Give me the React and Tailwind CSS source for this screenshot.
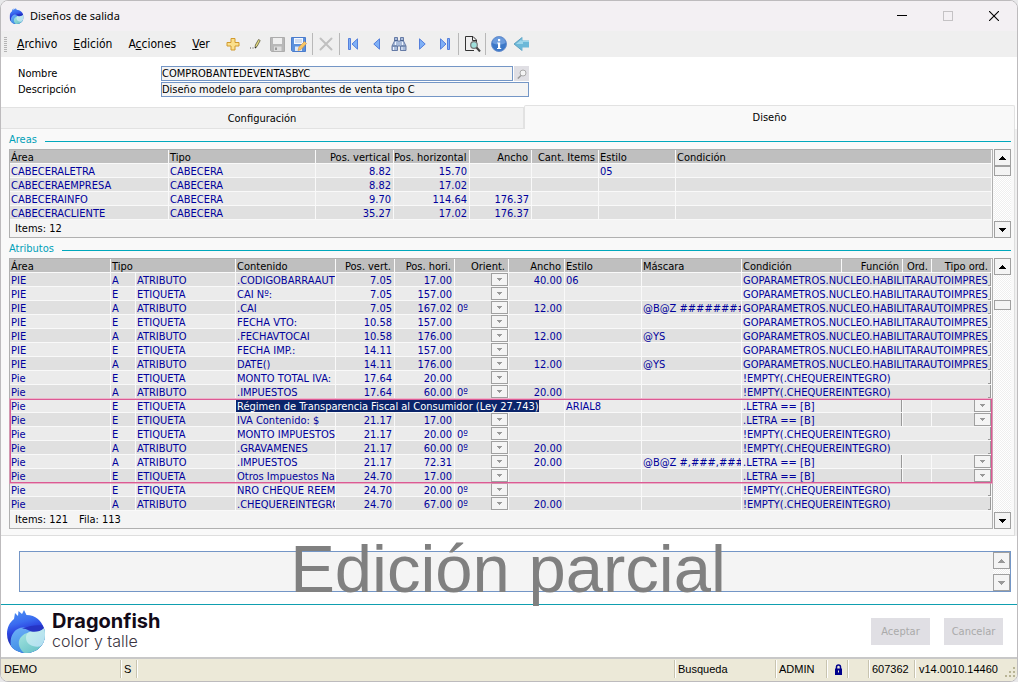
import React from "react";

const areaRows = [
  ["CABECERALETRA", "CABECERA", "8.82", "15.70", "", "", "05", ""],
  ["CABECERAEMPRESA", "CABECERA", "8.82", "17.02", "", "", "", ""],
  ["CABECERAINFO", "CABECERA", "9.70", "114.64", "176.37", "", "", ""],
  ["CABECERACLIENTE", "CABECERA", "35.27", "17.02", "176.37", "", "", ""],
];

const AUTO = "GOPARAMETROS.NUCLEO.HABILITARAUTOIMPRES";
const EMPTY = "!EMPTY(.CHEQUEREINTEGRO)";
const LETRA = ".LETRA == [B]";

// area, type, content, vertical, horizontal, orientation, width, style, mask, condition
const attributeRows = [
  ["PIE", "A", ".CODIGOBARRAAUT", "7.05", "17.00", "", "40.00", "06", "", AUTO],
  ["PIE", "E", "CAI Nº:", "7.05", "157.00", "", "", "", "", AUTO],
  ["PIE", "A", ".CAI", "7.05", "167.02", "0º", "12.00", "", "@B@Z ########", AUTO],
  ["PIE", "E", "FECHA VTO:", "10.58", "157.00", "", "", "", "", AUTO],
  ["PIE", "A", ".FECHAVTOCAI", "10.58", "176.00", "", "12.00", "", "@YS", AUTO],
  ["PIE", "E", "FECHA IMP.:", "14.11", "157.00", "", "", "", "", AUTO],
  ["PIE", "A", "DATE()", "14.11", "176.00", "", "12.00", "", "@YS", AUTO],
  ["Pie", "E", "MONTO TOTAL IVA:", "17.64", "20.00", "", "", "", "", EMPTY],
  ["Pie", "A", ".IMPUESTOS", "17.64", "60.00", "0º", "20.00", "", "", EMPTY],
  ["Pie", "E", "Régimen de Transparencia Fiscal al Consumidor (Ley 27.743)", null, "", "", "", "ARIAL8", "", LETRA],
  ["Pie", "E", "IVA Contenido: $", "21.17", "17.00", "", "", "", "", LETRA],
  ["Pie", "E", "MONTO IMPUESTOS", "21.17", "20.00", "0º", "", "", "", EMPTY],
  ["Pie", "A", ".GRAVAMENES", "21.17", "60.00", "0º", "20.00", "", "", EMPTY],
  ["Pie", "A", ".IMPUESTOS", "21.17", "72.31", "", "20.00", "", "@B@Z #,###,###", LETRA],
  ["Pie", "E", "Otros Impuestos Nac", "24.70", "17.00", "", "", "", "", LETRA],
  ["Pie", "E", "NRO CHEQUE REEME", "24.70", "20.00", "0º", "", "", "", EMPTY],
  ["Pie", "A", ".CHEQUEREINTEGRO", "24.70", "67.00", "0º", "20.00", "", "", EMPTY],
];

const UI = "font-['DejaVu_Sans_Condensed','DejaVu_Sans',sans-serif] [font-stretch:condensed]";

function Cell({ children, right, flush, ...rest }) {
  const pad = flush ? "p-0" : right ? "pt-[2px] pr-[2px] text-right" : "pt-[2px] pl-px text-left";
  return (
    <td
      className={`h-[14px] overflow-hidden border-r border-b border-[#f9f9f9] leading-[11px] whitespace-nowrap ${pad}`}
      {...rest}
    >
      {children}
    </td>
  );
}

function Head({ children, right, ...rest }) {
  return (
    <th
      scope="col"
      className={`h-[14px] overflow-hidden border-r border-b border-[#f9f9f9] pt-[2px] leading-[11px] font-normal whitespace-nowrap ${
        right ? "pr-[3px] text-right" : "pl-px text-left"
      }`}
      {...rest}
    >
      {children}
    </th>
  );
}

function DropBox() {
  return (
    <span aria-hidden="true" className="flex h-[13px] w-[17px] shrink-0 items-center justify-center border border-[#a0a0a0] bg-[#f4f4f4]">
      <svg width="5" height="3" viewBox="0 0 5 3">
        <path d="M0 0h5v1H4v1H3v1H2V2H1V1H0z" fill="#999" />
      </svg>
    </span>
  );
}

function Combo({ value, label }) {
  return (
    <div className="flex h-[13px]">
      <select aria-label={label} defaultValue={value} className="h-[13px] min-w-0 flex-1 appearance-none bg-transparent p-0 pt-[2px] pl-[2px] leading-[11px] outline-none">
        <option value={value}>{value}</option>
      </select>
      <DropBox />
    </div>
  );
}

function ScrollButton({ up, muted, label }) {
  return (
    <button type="button" aria-label={label} className="flex h-[17px] w-[17px] shrink-0 items-center justify-center border border-[#a0a0a0] bg-[#f4f4f4]">
      <svg width="7" height="4" viewBox="0 0 7 4" fill={muted ? "#999" : "#000"}>
        <path d={up ? "M3 0h1v1h1v1h1v1h1v1H0V3h1V2h1V1h1z" : "M0 0h7v1H6v1H5v1H4v1H3V3H2V2H1V1H0z"} />
      </svg>
    </button>
  );
}

const TRACK = "bg-[repeating-conic-gradient(#ffffff_0_25%,#efefef_0_50%)] bg-[length:2px_2px]";

function GridScroll({ children }) {
  return (
    <div className={`ml-px flex w-[17px] shrink-0 flex-col ${TRACK}`}>
      <ScrollButton up label="Subir" />
      {children}
      <div className="flex-1" />
      <ScrollButton label="Bajar" />
    </div>
  );
}

function Legend({ children }) {
  return (
    <div className="mt-[3px] mb-[3px] flex h-[14px] items-start gap-[8px]">
      <h2 className="leading-[16px] text-[#00a0b8]">{children}</h2>
      <div className="mb-1 h-px flex-1 self-end bg-[#00a8bc]" />
    </div>
  );
}

function AreasGrid() {
  return (
    <div className="flex">
      <div className="min-w-0 flex-1 border border-[#b0b0b0] bg-[#f4f4f4]">
        <table className="w-full table-fixed border-separate border-spacing-0">
          <colgroup>
            <col className="w-[159px]" />
            <col className="w-[147px]" />
            <col className="w-[78px]" />
            <col className="w-[76px]" />
            <col className="w-[62px]" />
            <col className="w-[67px]" />
            <col className="w-[77px]" />
            <col />
          </colgroup>
          <thead className="bg-[#bfbfbf] text-black">
            <tr>
              <Head>Área</Head>
              <Head>Tipo</Head>
              <Head right>Pos. vertical</Head>
              <Head right>Pos. horizontal</Head>
              <Head right>Ancho</Head>
              <Head right>Cant. Items</Head>
              <Head>Estilo</Head>
              <Head>Condición</Head>
            </tr>
          </thead>
          <tbody className="text-[#00009c]">
            {areaRows.map((row) => (
              <tr key={row[0]} className="odd:bg-[#ebebeb] even:bg-[#e0e0e0]">
                {row.map((value, i) => (
                  <Cell key={i} right={i > 1 && i < 6}>{value}</Cell>
                ))}
              </tr>
            ))}
          </tbody>
        </table>
        <p className="h-[17px] pl-[5px] leading-[17px] text-black">Items: 12</p>
      </div>
      <GridScroll>
        <div className="h-[10px] border border-[#a0a0a0] bg-[#f4f4f4]" />
      </GridScroll>
    </div>
  );
}

function AttributesGrid() {
  return (
    <div className="flex">
      <div className="relative min-w-0 flex-1 border border-[#b0b0b0] bg-[#f4f4f4]">
        <table className="w-full table-fixed border-separate border-spacing-0">
          <colgroup>
            <col className="w-[101px]" />
            <col className="w-[25px]" />
            <col className="w-[100px]" />
            <col className="w-[100px]" />
            <col className="w-[59px]" />
            <col className="w-[60px]" />
            <col className="w-[54px]" />
            <col className="w-[56px]" />
            <col className="w-[77px]" />
            <col className="w-[100px]" />
            <col className="w-[100px]" />
            <col className="w-[61px]" />
            <col className="w-[29px]" />
            <col />
          </colgroup>
          <thead className="bg-[#bfbfbf] text-black">
            <tr>
              <Head>Área</Head>
              <Head colSpan={2}>Tipo</Head>
              <Head>Contenido</Head>
              <Head right>Pos. vert.</Head>
              <Head right>Pos. hori.</Head>
              <Head right>Orient.</Head>
              <Head right>Ancho</Head>
              <Head>Estilo</Head>
              <Head>Máscara</Head>
              <Head>Condición</Head>
              <Head right>Función</Head>
              <Head right>Ord.</Head>
              <Head right>Tipo ord.</Head>
            </tr>
          </thead>
          <tbody className="text-[#00009c]">
            {attributeRows.map(([area, type, content, vert, hori, orient, width, style, mask, cond], i) => (
              <tr key={i} className="odd:bg-[#e0e0e0] even:bg-[#ebebeb]">
                <Cell>{area}</Cell>
                <Cell>{type}</Cell>
                <Cell>{type === "A" ? "ATRIBUTO" : "ETIQUETA"}</Cell>
                {vert === null ? (
                  <Cell flush colSpan={5}>
                    <span className="inline-block h-[13px] bg-[#0a246a] pt-[2px] pl-px align-top leading-[11px] text-white">{content}</span>
                  </Cell>
                ) : (
                  <>
                    <Cell>{content}</Cell>
                    <Cell right>{vert}</Cell>
                    <Cell right>{hori}</Cell>
                    <Cell flush>
                      <Combo value={orient} label={`Orientación, fila ${i + 1}`} />
                    </Cell>
                    <Cell right>{width}</Cell>
                  </>
                )}
                <Cell>{style}</Cell>
                <Cell>{mask}</Cell>
                {cond === LETRA ? (
                  <>
                    <Cell flush colSpan={2}>
                      <div className="h-[13px] border-r border-[#999] pt-[2px] pl-px">{cond}</div>
                    </Cell>
                    <Cell />
                    <Cell flush>
                      <Combo value="" label={`Tipo de orden, fila ${i + 1}`} />
                    </Cell>
                  </>
                ) : (
                  <Cell flush colSpan={4}>
                    <div className="flex h-[13px]">
                      <span className="min-w-0 flex-1 overflow-hidden pt-[2px] pl-px">{cond}</span>
                      <span className="w-[3px] border-r border-b border-[#999]" />
                    </div>
                  </Cell>
                )}
              </tr>
            ))}
          </tbody>
        </table>
        <p className="flex h-[17px] gap-[11px] pl-[5px] leading-[17px] text-black">
          <span>Items: 121</span>
          <span>Fila: 113</span>
        </p>
        <div className="pointer-events-none absolute inset-x-0 top-[140px] h-[84px] border border-[#dc5a94] shadow-[0_0_0_1px_#e48ab0a0]" />
      </div>
      <GridScroll>
        <div className="mt-[25px] h-[10px] border border-[#a0a0a0] bg-[#f4f4f4]" />
      </GridScroll>
    </div>
  );
}

function DragonLogo({ className, id }) {
  return (
    <svg viewBox="0 0 38 43" className={className} aria-hidden="true">
      <defs>
        <clipPath id={`${id}clip`}>
          <path d="M7 9 8 3l3 3 .5-5L15 4l2-4 2.500 5C29 5 34 11 36.500 17c1 3 1.500 5 1.500 8 0 10-8 18-19 18S0 35 0 24C0 17 3 12 7 9z" />
        </clipPath>
        <linearGradient id={`${id}a`} x1="0.35" y1="0" x2="0.5" y2="0.6">
          <stop offset="0" stopColor="#4a8cf2" />
          <stop offset="0.45" stopColor="#3a6cf0" />
          <stop offset="0.75" stopColor="#2c44e0" />
          <stop offset="1" stopColor="#2434c0" />
        </linearGradient>
        <linearGradient id={`${id}b`} x1="0" y1="0" x2="0.4" y2="1">
          <stop offset="0" stopColor="#6fb0f8" />
          <stop offset="1" stopColor="#3c8ce4" />
        </linearGradient>
        <linearGradient id={`${id}c`} x1="0" y1="0" x2="0.6" y2="1">
          <stop offset="0" stopColor="#aeeae4" />
          <stop offset="1" stopColor="#6cc4c8" />
        </linearGradient>
        <linearGradient id={`${id}d`} x1="0" y1="0" x2="1" y2="1">
          <stop offset="0" stopColor="#c6f0ea" />
          <stop offset="1" stopColor="#b0dcf2" />
        </linearGradient>
      </defs>
      <g clipPath={`url(#${id}clip)`}>
        <path d="M0 0h38v43H0z" fill={`url(#${id}a)`} />
        <path d="M7 43C3 38 2 28 7 22c4-5 11-6 17-2 5 1 10 0 14-2v25z" fill={`url(#${id}b)`} />
        <path d="M17 43c-6-5-7-13-2-17 3-3 7-4 10-4 5 0 9-1 13-4v25z" fill={`url(#${id}c)`} />
        <path d="M38 17c3 8 1 16-5 19.500-8 1-14-3-14-8.500 0-5 3-7 8-7 4 0 8-1 11-4z" fill={`url(#${id}d)`} />
        <path d="M15 18.500c8-3 15-4 21-3l1 2.500c-4 4-11 5-15 2.500-2-1.200-4.500-2-7-2z" fill="#2634c4" />
      </g>
    </svg>
  );
}

const icons = {
  Nuevo: (
    <svg width="14" height="14" viewBox="0 0 14 14">
      <path d="M5 1.500h4v4h4v3.500H9v4H5V9H1V5.500h4z" fill="#fbe08c" stroke="#d19a2e" />
    </svg>
  ),
  Modificar: (
    <svg width="12" height="12" viewBox="0 0 12 12">
      <path d="M1 10h1M3.500 10h1" stroke="#555" strokeWidth="1.200" />
      <path d="m6 10 .4-3L9.500 1.500l1.700 1L8 8.500z" fill="#e6dc7c" stroke="#6c6a50" strokeWidth=".9" />
      <path d="m6 10 1.300-.8" stroke="#222" />
    </svg>
  ),
  Guardar: (
    <svg width="15" height="15" viewBox="0 0 15 15">
      <path d="M.5.500h14v14h-13l-1-1z" fill="#b8b8b8" stroke="#acacac" />
      <path d="M3 1h9v6H3z" fill="#efefef" />
      <path d="M4 9.500h7.500V14H4z" fill="#dedede" />
      <path d="M5 10.500h2V13H5z" fill="#999" />
    </svg>
  ),
  "Guardar y editar": (
    <svg width="16" height="15" viewBox="0 0 16 15">
      <path d="M.5.500h14v14h-13l-1-1z" fill="#5b90dc" stroke="#4a7ccc" />
      <path d="M3 1h9v6H3z" fill="#f4f8ff" />
      <path d="M4 3h7M4 5h7" stroke="#a9c0e2" />
      <path d="M4 9.500h7V14H4z" fill="#dce8f8" />
      <path d="m7 13.500 1-3.500 5.500-5.500 2 2L10 12.500z" fill="#f7c765" stroke="#d89a50" strokeWidth=".7" />
    </svg>
  ),
  Eliminar: (
    <svg width="14" height="14" viewBox="0 0 14 14">
      <path d="m1.500 1.500 11 11m0-11-11 11" stroke="#c0c0c0" strokeWidth="2" strokeLinecap="round" />
    </svg>
  ),
  Primero: (
    <svg width="10" height="12" viewBox="0 0 10 12">
      <path d="M.5.500h2v11h-2zM9.500.800v10.400L4 6z" fill="#7fb0f6" stroke="#4a76d8" strokeWidth=".9" />
    </svg>
  ),
  Anterior: (
    <svg width="7" height="12" viewBox="0 0 7 12">
      <path d="M6.500.800v10.400L.800 6z" fill="#7fb0f6" stroke="#4a76d8" strokeWidth=".9" />
    </svg>
  ),
  Buscar: (
    <svg width="16" height="14" viewBox="0 0 16 14">
      <path d="M3.500.500h3V4h3V.500h3V4l2.500 5v4.500H9.500V9h-3v4.500H1V9l2.500-5z" fill="#a9bcda" stroke="#5a719e" strokeWidth=".9" />
      <path d="M1.500 9h4.500M10 9h4.500M3.500 3.500h3M9.500 3.500h3" stroke="#4a628e" />
      <path d="M2.500 10v3M11 10v3M4.500 5v3M11.500 5v3" stroke="#eef4ff" />
    </svg>
  ),
  Siguiente: (
    <svg width="7" height="12" viewBox="0 0 7 12">
      <path d="M.5.800v10.400L6.200 6z" fill="#7fb0f6" stroke="#4a76d8" strokeWidth=".9" />
    </svg>
  ),
  "Último": (
    <svg width="10" height="12" viewBox="0 0 10 12">
      <path d="M7.500.500h2v11h-2zM.5.800v10.400L6 6z" fill="#7fb0f6" stroke="#4a76d8" strokeWidth=".9" />
    </svg>
  ),
  "Vista previa": (
    <svg width="17" height="16" viewBox="0 0 17 16" fill="none">
      <path d="M10 14.500H1.500V.500H9L12.500 4v2M8.500.500v4h4" stroke="#333" />
      <circle cx="10" cy="9" r="3.300" fill="#9fe0dc" stroke="#777" strokeWidth="1.200" />
      <path d="m12.500 11.500 3.500 4" stroke="#444" strokeWidth="2" />
    </svg>
  ),
  "Información": (
    <svg width="16" height="16" viewBox="0 0 16 16">
      <circle cx="8" cy="8" r="7.500" fill="#3c78c8" stroke="#6a90cc" />
      <path d="M1.500 7a6.500 6 0 0 1 13 0c-4 2-9 2-13 0z" fill="#7eaae6" opacity=".7" />
      <path d="M7 3h2.200v2.200H7zM6.200 6.500h3V12h1v1H6v-1h1V7.500h-.8z" fill="#fff" />
    </svg>
  ),
  Volver: (
    <svg width="16" height="16" viewBox="0 0 16 16">
      <path d="M16 4.500H9.500V1L1 8l8.500 7v-3.500H16z" fill="#6cb8d8" />
      <path d="M9 1.500 1 8l8 6.500" fill="none" stroke="#5a9cbc" strokeWidth=".9" />
      <path d="M8.500 3.500 3 8h7V6h6V5H8.500z" fill="#b4e2f2" opacity=".7" />
    </svg>
  ),
};

function ToolGroup({ names, gap = "" }) {
  return (
    <div className={`flex ${gap}`}>
      {names.map((name) => (
        <button key={name} type="button" aria-label={name} className="flex h-[22px] w-[22px] items-center justify-center">
          {icons[name]}
        </button>
      ))}
    </div>
  );
}

const Divider = () => <div className="mx-[2px] h-[22px] w-px bg-[#b8b8b8]" />;

function MenuItem({ children }) {
  return <button type="button" className="leading-[18px]">{children}</button>;
}

const STATUS = "flex h-[18px] items-center border-r border-[#c8c4b0] pl-[3px] shadow-[1px_0_0_#ffffff]";

export default function App() {
  return (
    <div className="flex min-h-screen flex-col bg-[#e8e8ea] pb-px">
      <div className={`flex flex-1 flex-col overflow-hidden rounded-[8px] border border-[#bdbbbd] bg-white text-[11px] text-black ${UI}`}>
        <header className="flex h-[30px] items-center bg-[#f3f0f3] pl-[8px] font-['Noto_Sans',sans-serif]">
          <DragonLogo id="t" className="h-[16px] w-[15px]" />
          <h1 className="flex-1 pl-[6px] text-[11px]">Diseños de salida</h1>
          <div className="flex">
            <button type="button" aria-label="Minimizar" className="flex h-[30px] w-[46px] items-center justify-center">
              <svg width="10" height="10" viewBox="0 0 10 10"><path d="M0 4.500h10" stroke="#000" /></svg>
            </button>
            <button type="button" aria-label="Maximizar" disabled className="flex h-[30px] w-[46px] items-center justify-center">
              <svg width="10" height="10" viewBox="0 0 10 10"><rect x=".5" y=".5" width="9" height="9" fill="none" stroke="#c4c2c4" /></svg>
            </button>
            <button type="button" aria-label="Cerrar" className="flex h-[30px] w-[46px] items-center justify-center">
              <svg width="10" height="10" viewBox="0 0 10 10"><path d="m0 0 10 10M10 0 0 10" stroke="#000" strokeWidth="1.100" /></svg>
            </button>
          </div>
        </header>

        <nav className="flex h-[26px] items-center bg-[#efefef]">
          <div className="ml-[3px] h-[15px] w-[3px] bg-[repeating-linear-gradient(#b4b4b4_0_1px,#efefef_1px_2px)]" />
          <div className="flex w-[215px] gap-[16px] pl-[10px] text-[12px]">
            <MenuItem><u>A</u>rchivo</MenuItem>
            <MenuItem><u>E</u>dición</MenuItem>
            <MenuItem>A<u>c</u>ciones</MenuItem>
            <MenuItem><u>V</u>er</MenuItem>
          </div>
          <div className="flex flex-1 items-center">
            <ToolGroup names={["Nuevo", "Modificar", "Guardar", "Guardar y editar"]} />
            <Divider />
            <ToolGroup names={["Eliminar"]} />
            <Divider />
            <ToolGroup gap="gap-px" names={["Primero", "Anterior", "Buscar", "Siguiente", "Último"]} />
            <Divider />
            <ToolGroup names={["Vista previa"]} />
            <Divider />
            <ToolGroup names={["Información", "Volver"]} />
          </div>
        </nav>

        <form className="flex flex-col gap-px pt-[9px] pb-[8px] pl-[17px]">
          <div className="flex h-[15px]">
            <label htmlFor="nombre" className="w-[143px] leading-[15px]">Nombre</label>
            <input id="nombre" defaultValue="COMPROBANTEDEVENTASBYC" className="h-[15px] w-[352px] border border-[#7496c6] bg-[#f4f4f4] p-0 leading-[13px] outline-none" />
            <button type="button" aria-label="Buscar nombre" className="ml-px flex h-[15px] w-[15px] items-center justify-center bg-[#e0dfe4]">
              <svg width="10" height="10" viewBox="0 0 10 10" fill="none">
                <circle cx="6" cy="4" r="3" fill="#f4f4f4" stroke="#aaa" />
                <path d="M4 6.500.800 9.500" stroke="#999" strokeWidth="1.500" />
              </svg>
            </button>
          </div>
          <div className="flex h-[15px]">
            <label htmlFor="descripcion" className="w-[143px] leading-[15px]">Descripción</label>
            <input id="descripcion" defaultValue="Diseño modelo para comprobantes de venta tipo C" className="h-[15px] w-[368px] border border-[#7496c6] bg-[#f4f4f4] p-0 leading-[13px] outline-none" />
          </div>
        </form>

        <div role="tablist" className="mr-[2px] flex h-[24px] items-end">
          <button type="button" role="tab" aria-selected="false" className="h-[22px] w-[523px] border-y border-r border-[#e2e2e2] bg-[#f2f2f2] pt-[2px] leading-[18px]">
            Configuración
          </button>
          <button type="button" role="tab" aria-selected="true" className="h-[24px] flex-1 rounded-t-[2px] border-x border-t border-[#e2e2e2] bg-[#f9f9f9] leading-[22px]">
            Diseño
          </button>
        </div>

        <div className="bg-[#f0f0f0] pr-[2px]">
          <main className="flow-root border-r border-b border-[#dedede] bg-[#f9f9f9] pr-[3px] pb-[6px] pl-[8px]">
            <section>
              <Legend>Areas</Legend>
              <AreasGrid />
            </section>
            <section>
              <Legend>Atributos</Legend>
              <AttributesGrid />
            </section>
          </main>
        </div>

        <div className="relative mt-[15px] mr-[6px] mb-[12px] ml-[18px] flex h-[41px] border border-[#7496c6] bg-[#f4f4f4]">
          <textarea aria-label="Observaciones" className="min-w-0 flex-1 resize-none bg-transparent p-1 outline-none" />
          <div className={`flex w-[17px] flex-col justify-between ${TRACK}`}>
            <ScrollButton up muted label="Subir texto" />
            <ScrollButton muted label="Bajar texto" />
          </div>
          <p className="pointer-events-none absolute inset-x-0 top-[-21px] pr-[14px] text-center font-['Liberation_Sans',Arial,sans-serif] text-[67px] leading-[76px] whitespace-nowrap text-[#808080]">
            Edición parcial
          </p>
        </div>

        <footer className="mt-auto flex h-[53px] items-center border-t border-[#0f9fb0] pr-[14px] pl-[6px]">
          <DragonLogo id="f" className="h-[43px] w-[38px]" />
          <div className="flex-1 pl-[7px] font-['Inter',sans-serif]">
            <p className="text-[20px] leading-[20px] font-bold text-[#120a18]">Dragonfish</p>
            <p className="text-[16px] leading-[20px] font-light text-[#3a3340]">color y talle</p>
          </div>
          <div className="flex gap-[14px] text-[#aaa] [text-shadow:1px_1px_0_#ffffff]">
            <button type="button" disabled className="h-[27px] w-[59px] bg-[#e0dfe4] pt-[2px]">Aceptar</button>
            <button type="button" disabled className="h-[27px] w-[59px] bg-[#e0dfe4] pt-[2px]">Cancelar</button>
          </div>
        </footer>

        <div role="status" className="flex h-[24px] items-center border-t-2 border-[#c8c8c8] bg-[#ece9d8] pb-[2px] font-['Liberation_Sans',Arial,sans-serif]">
          <div className={`${STATUS} w-[120px]`}>DEMO</div>
          <div className={`${STATUS} w-[16px]`}>S</div>
          <div className={`${STATUS} flex-1`} />
          <div className={`${STATUS} w-[101px]`}>Busqueda</div>
          <div className={`${STATUS} w-[51px]`}>ADMIN</div>
          <div className={`${STATUS} w-[21px]`}>
            <svg width="9" height="11" viewBox="0 0 9 11" className="mx-auto">
              <path d="M2.500 5V3a2 2 0 0 1 4 0v2" fill="none" stroke="#00008c" strokeWidth="1.500" />
              <path d="M1 4.500h7V11H1z" fill="#00008c" />
              <path d="M4 6.500h1v2H4z" fill="#ece9d8" />
            </svg>
          </div>
          <div className={`${STATUS} w-[21px]`} />
          <div className={`${STATUS} w-[46px]`}>607362</div>
          <div className="flex h-[18px] w-[90px] items-center pl-[4px]">v14.0010.14460</div>
          <svg width="12" height="12" viewBox="0 0 12 12" className="self-end" fill="#b8b494">
            <path d="M8 0h2v2H8zM8 4h2v2H8zM4 4h2v2H4zM8 8h2v2H8zM4 8h2v2H4zM0 8h2v2H0z" />
          </svg>
        </div>
      </div>
    </div>
  );
}
